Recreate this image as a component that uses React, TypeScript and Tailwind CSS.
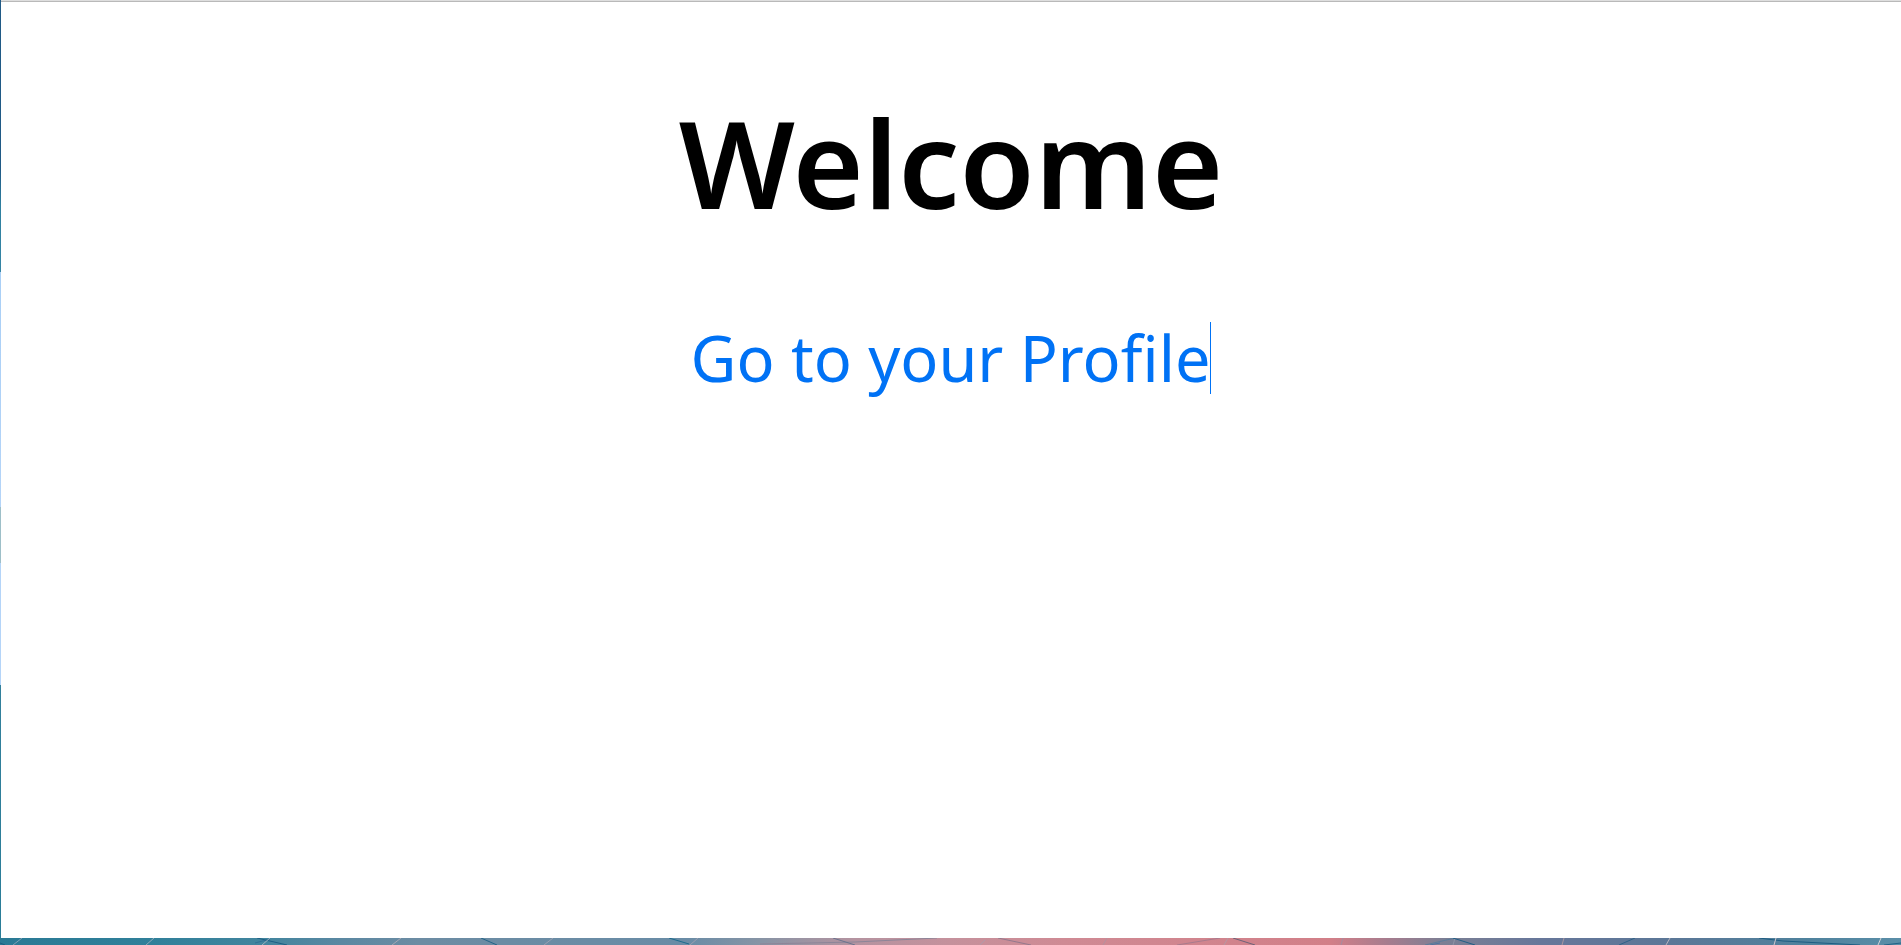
interface Stroke {
  d: string
  color: string
}

const STRIP_COLORS = [
  { at: '0%', color: '#2a7a95' },
  { at: '8%', color: '#30809a' },
  { at: '14%', color: '#42859e' },
  { at: '18%', color: '#5b88a2' },
  { at: '22%', color: '#6c8ca3' },
  { at: '36%', color: '#698ca6' },
  { at: '40%', color: '#8794a5' },
  { at: '45%', color: '#b593a0' },
  { at: '50%', color: '#c5919c' },
  { at: '56%', color: '#cf8a94' },
  { at: '70%', color: '#d27f88' },
  { at: '73%', color: '#a67c8e' },
  { at: '76%', color: '#7b7f94' },
  { at: '81%', color: '#67779a' },
  { at: '88%', color: '#5b7797' },
  { at: '95%', color: '#4f829d' },
  { at: '100%', color: '#5a8ea8' },
]

const STRIP_STROKES: Stroke[] = [
  { d: 'M0 5L5 7', color: '#1c5f80' },
  { d: 'M13 7L22 0', color: '#7e9fb4' },
  { d: 'M146 7L154 0', color: '#8ea8b8' },
  { d: 'M255 5L270 1', color: '#2f6f95' },
  { d: 'M257 0L287 7', color: '#1d5f84' },
  { d: 'M262 7L270 0', color: '#9fb0bd' },
  { d: 'M392 7L401 0', color: '#a5a7b3' },
  { d: 'M481 0L497 7', color: '#236487' },
  { d: 'M544 7L553 0', color: '#9aa0b2' },
  { d: 'M669 0L689 6', color: '#1c6b8c' },
  { d: 'M690 7L698 0', color: '#9c9fb0' },
  { d: 'M760 6L855 4L937 0', color: '#8d8598' },
  { d: 'M833 0L855 7', color: '#6b748e' },
  { d: 'M980 7L985 2', color: '#b19aaa' },
  { d: 'M998 0L1031 7', color: '#95798d' },
  { d: 'M1103 7L1107 0', color: '#b592a0' },
  { d: 'M1177 7L1220 0', color: '#a97b8d' },
  { d: 'M1224 7L1228 0', color: '#b598a4' },
  { d: 'M1233 0L1255 7', color: '#6e6378' },
  { d: 'M1341 7L1343 0', color: '#a58da0' },
  { d: 'M1430 7L1440 5', color: '#4f74a0' },
  { d: 'M1425 7L1455 0', color: '#5c7c9b' },
  { d: 'M1453 7L1455 0', color: '#8f93a5' },
  { d: 'M1453 0L1475 7', color: '#215f86' },
  { d: 'M1562 7L1564 0', color: '#a8969f' },
  { d: 'M1619 7L1635 0', color: '#2f6288' },
  { d: 'M1666 7L1670 0', color: '#b9b5bd' },
  { d: 'M1759 0L1783 3L1860 7', color: '#1d5d82' },
  { d: 'M1774 7L1776 0', color: '#d0c8cc' },
  { d: 'M1878 7L1881 0', color: '#d0d2d8' },
  { d: 'M1884 7L1901 5', color: '#206286' },
]

function WallpaperStrip() {
  return (
    <svg
      className="block h-[7px] w-full shrink-0"
      viewBox="0 0 1901 7"
      preserveAspectRatio="none"
      aria-hidden="true"
    >
      <defs>
        <linearGradient id="strip" x1="0" x2="1" y1="0" y2="0">
          {STRIP_COLORS.map((stop) => (
            <stop key={stop.at} offset={stop.at} stopColor={stop.color} />
          ))}
        </linearGradient>
      </defs>
      <rect width="1901" height="7" fill="url(#strip)" />
      {STRIP_STROKES.map((stroke) => (
        <path key={stroke.d} d={stroke.d} stroke={stroke.color} fill="none" />
      ))}
    </svg>
  )
}

export default function App() {
  return (
    <div className="flex min-h-screen flex-col bg-white font-['Noto_Sans',sans-serif]">
      <div className="flex flex-1">
        {/* Sliver of desktop beside the window */}
        <div className="w-px shrink-0 bg-[linear-gradient(to_bottom,#205a86_0%,#205a86_18%,#2f80a0_22%,#3585a5_29%,#a9cff6_29%,#b4d4f8_54%,#9dbfc8_54%,#9dbfc8_60%,#b4d4f8_60%,#b4d4f8_73%,#32809c_73%,#2a7d98_100%)]" />

        <div className="flex-1 border-t border-[#dedede]">
          <div className="h-px bg-[#b9b9b9]" />
          <main className="flex flex-col items-center pt-20 text-center">
            <h1 className="text-[122px] leading-[160px] font-semibold text-black">Welcome</h1>
            <a
              href="#profile"
              className="mt-20 border-r border-[#0072f5] text-[63px] leading-[72px] text-[#0072f5]"
            >
              Go to your Profile
            </a>
          </main>
        </div>
      </div>
      <WallpaperStrip />
    </div>
  )
}
